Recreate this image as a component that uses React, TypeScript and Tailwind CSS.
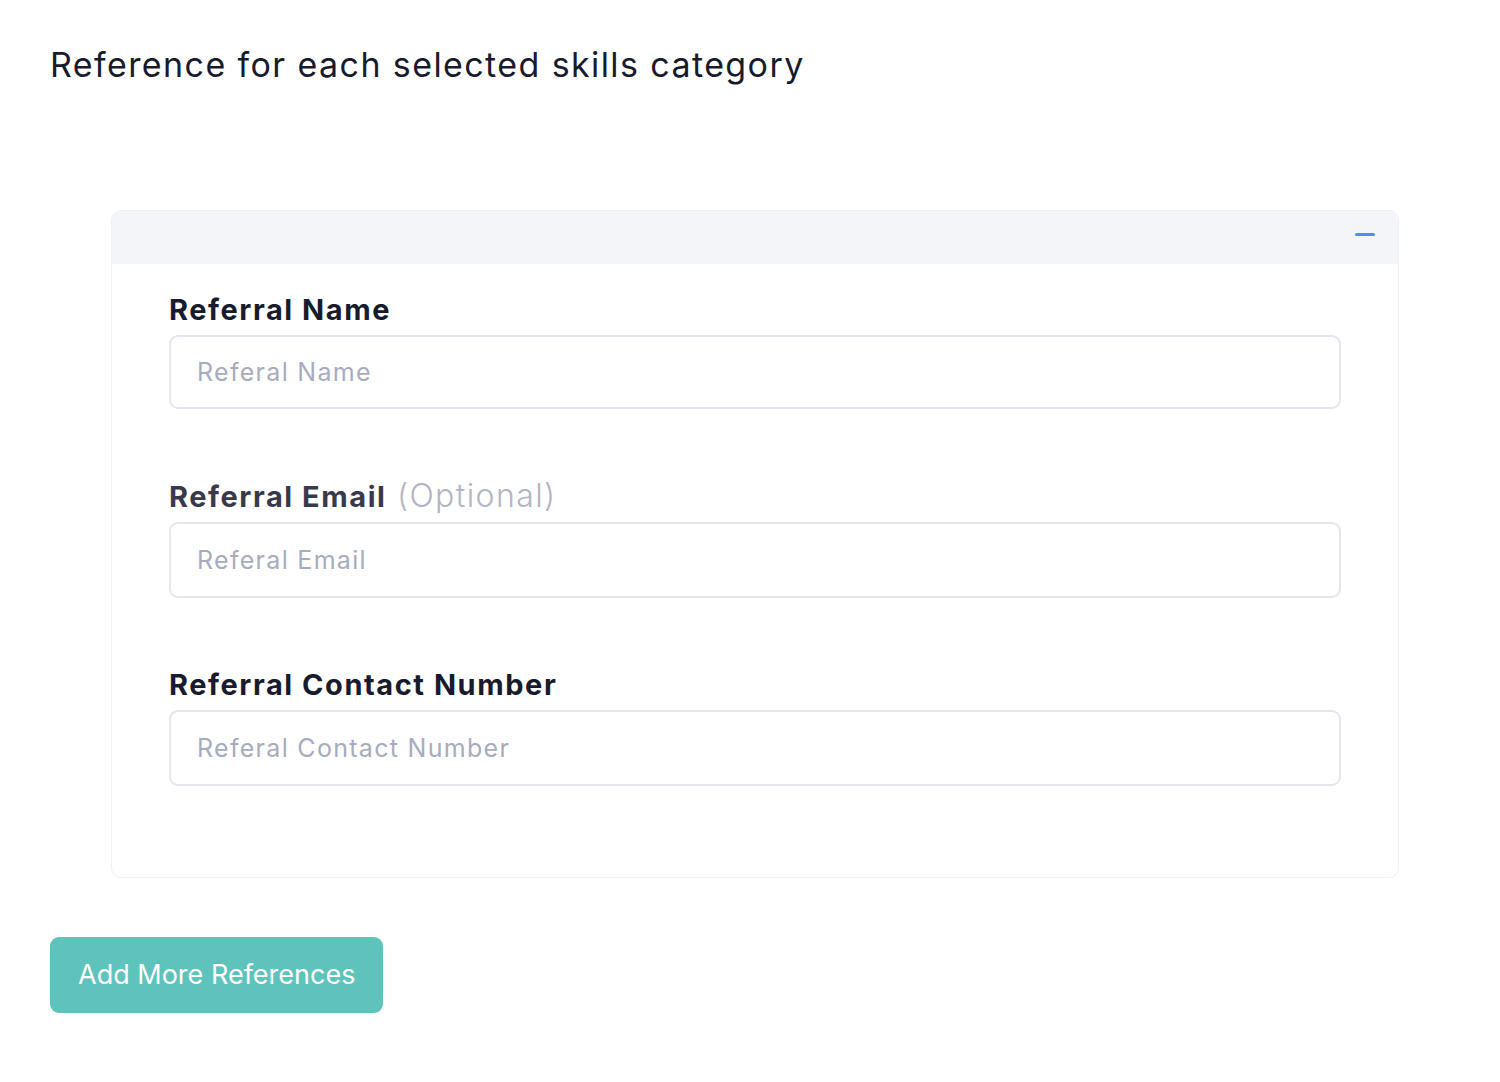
import { useState } from "react"

const font = { fontFamily: "Inter, 'Noto Sans', sans-serif" }

interface FieldProps {
  label: string
  optional?: boolean
  placeholder: string
  muted?: boolean
  className?: string
  inputClass?: string
}

function Field({ label, optional, placeholder, muted, className, inputClass }: FieldProps) {
  const [value, setValue] = useState("")
  return (
    <div className={`flex flex-col ${className ?? ""}`}>
      <label
        className={`text-[29px] leading-[30px] font-bold tracking-[1.55px] whitespace-nowrap ${
          muted ? "text-[#383a4b]" : "text-[#181b2d]"
        }`}
      >
        {label}
        {optional && (
          <span className="text-[32px] leading-[30px] font-light tracking-[1.4px] text-[#b3b4c4]"> (Optional)</span>
        )}
      </label>
      <input
        type="text"
        value={value}
        onChange={(e) => setValue(e.target.value)}
        placeholder={placeholder}
        className={`w-full rounded-[9px] border-2 border-[#e4e5ee] bg-white px-[26px] text-[25px] tracking-[1.3px] text-[#181b2d] outline-none placeholder:text-[#a9abbe] ${
          inputClass ?? ""
        }`}
      />
    </div>
  )
}

export default function App() {
  const [open, setOpen] = useState(true)

  return (
    <div className="min-h-[1082px] bg-white pl-[50px] pr-[50px] pt-[41px]" style={font}>
      <h1 className="text-[34px] leading-[48px] font-normal tracking-[1.4px] text-[#181b2d]">
        Reference for each selected skills category
      </h1>

      <div className="ml-[61px] mr-[51px] mt-[121px] overflow-hidden rounded-[10px] border border-[#eef0f5] bg-white">
        <div className="flex h-[53px] items-start justify-end bg-[#f4f5f9] pr-[23px] pt-[22px]">
          <button onClick={() => setOpen(!open)} className="flex h-[3px] w-[20px] items-center justify-center">
            <span className="block h-[3px] w-[20px] rounded-full bg-[#4d8ef5]" />
          </button>
        </div>
        {open && (
          <div className="flex flex-col px-[57px] pt-[31px] pb-[91px]">
            <Field label="Referral Name" placeholder="Referal Name" inputClass="mt-[10px] h-[74px]" />
            <Field
              label="Referral Email"
              optional
              placeholder="Referal Email"
              muted
              className="mt-[72px]"
              inputClass="mt-[10px] h-[76px]"
            />
            <Field
              label="Referral Contact Number"
              placeholder="Referal Contact Number"
              className="mt-[72px]"
              inputClass="mt-[10px] h-[76px]"
            />
          </div>
        )}
      </div>

      <button className="mt-[59px] h-[76px] rounded-[9px] bg-[#5ec3bb] px-[28px] text-[27px] text-white">
        Add More References
      </button>
    </div>
  )
}
